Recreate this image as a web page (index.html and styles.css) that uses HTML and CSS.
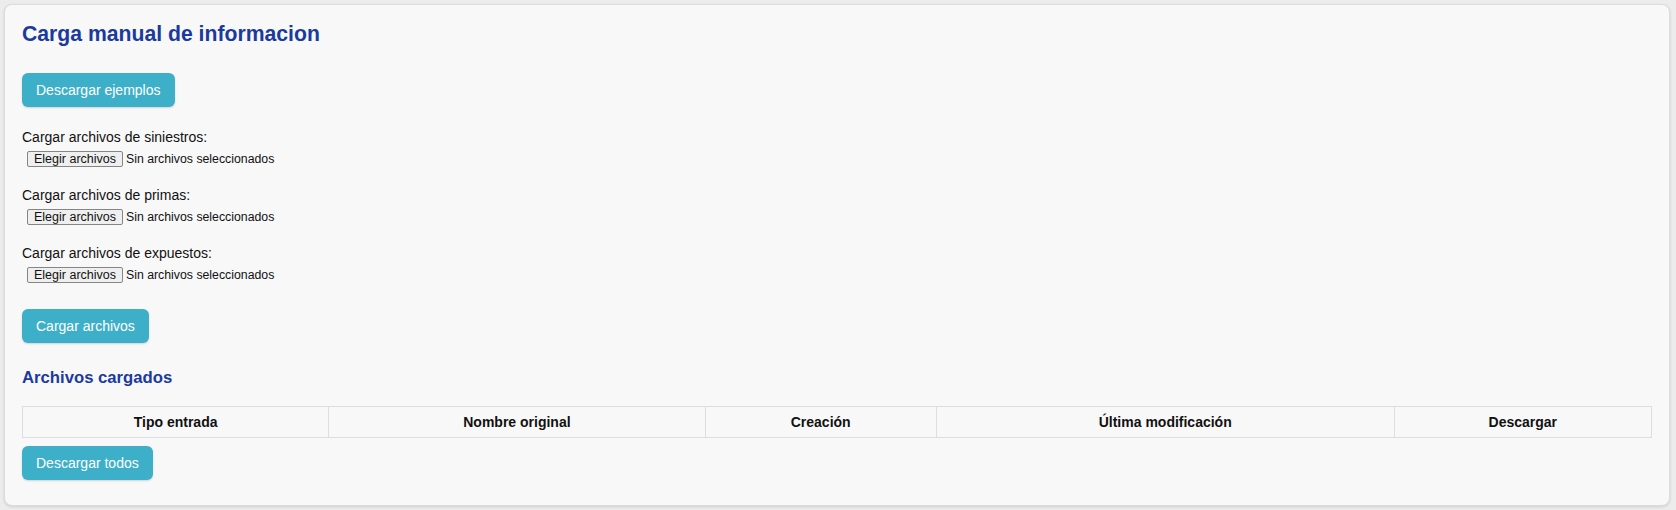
FILE: index.html
```html
<!DOCTYPE html>
<html lang="es">
<head>
    <meta charset="UTF-8">
    <meta name="viewport" content="width=device-width, initial-scale=1.0">
    <title>Carga manual de informacion</title>
    <link rel="stylesheet" href="styles.css">
</head>
<body>
    <div class="upload-card">
        <h2 class="title">Carga manual de informacion</h2>

        <button class="btn-info" id="downloadExamplesBtn">Descargar ejemplos</button>

        <!-- file pickers per input type -->
        <div class="file-group first">
            <span class="file-label">Cargar archivos de siniestros:</span>
            <label class="file-picker">
                <input type="file" id="siniestros" multiple>
                <span class="file-btn">Elegir archivos</span>
                <span class="file-name">Sin archivos seleccionados</span>
            </label>
        </div>
        <div class="file-group">
            <span class="file-label">Cargar archivos de primas:</span>
            <label class="file-picker">
                <input type="file" id="primas" multiple>
                <span class="file-btn">Elegir archivos</span>
                <span class="file-name">Sin archivos seleccionados</span>
            </label>
        </div>
        <div class="file-group">
            <span class="file-label">Cargar archivos de expuestos:</span>
            <label class="file-picker">
                <input type="file" id="expuestos" multiple>
                <span class="file-btn">Elegir archivos</span>
                <span class="file-name">Sin archivos seleccionados</span>
            </label>
        </div>

        <button class="btn-info upload-btn" id="uploadBtn">Cargar archivos</button>

        <h3 class="subtitle">Archivos cargados</h3>
        <table class="files-table">
            <thead>
                <tr>
                    <th class="col-tipo">Tipo entrada</th>
                    <th class="col-nombre">Nombre original</th>
                    <th class="col-creacion">Creación</th>
                    <th class="col-modif">Última modificación</th>
                    <th class="col-descargar">Descargar</th>
                </tr>
            </thead>
            <tbody id="filesBody"></tbody>
        </table>

        <button class="btn-info" id="downloadAllBtn">Descargar todos</button>
    </div>
</body>
</html>
```

FILE: styles.css
```css
body {
    font-family: "Liberation Sans", Arial, sans-serif;
    background-color: #ececec;
    color: #111;
    margin: 0;
    padding: 4px 6px 4px 4px;
}

.upload-card {
    background: #f8f8f8;
    border: 1px solid #dcdcdc;
    border-radius: 8px;
    box-shadow: 0 1px 3px rgba(0, 0, 0, 0.12);
    padding: 17px 17px 25px 17px;
}

.title {
    font-size: 21.2px;
    font-weight: bold;
    color: #1b3a9e;
    margin: 0 0 27px 0;
}

.btn-info {
    display: block;
    font-family: "Liberation Sans", Arial, sans-serif;
    font-size: 14px;
    line-height: 16px;
    padding: 9px 14px;
    border: none;
    border-radius: 6px;
    background: #3eafc9;
    color: #fff;
    box-shadow: 0 1px 2px rgba(0, 0, 0, 0.15);
    cursor: pointer;
}

.btn-info:hover {
    background: #3299b1;
}

.file-group {
    display: flex;
    flex-direction: column;
    align-items: flex-start;
    gap: 6px;
    margin-top: 20px;
}

.file-group.first {
    margin-top: 22px;
}

.file-label {
    font-size: 14px;
    line-height: 16px;
}

.file-picker {
    display: flex;
    align-items: center;
    gap: 3px;
    padding-left: 5px;
    font-size: 12.3px;
    cursor: pointer;
}

.file-picker input {
    display: none;
}

.file-btn {
    display: block;
    line-height: 14px;
    padding: 0 6px;
    background: #efefef;
    border: 1px solid #858585;
    border-radius: 2px;
    color: #111;
    font-size: 12.5px;
}

.file-name {
    color: #111;
}

.upload-btn {
    margin-top: 26px;
}

.subtitle {
    font-size: 16.7px;
    font-weight: bold;
    color: #1b3a9e;
    margin: 25px 0 18px 0;
}

.files-table {
    width: 100%;
    border-collapse: collapse;
    margin-bottom: 8px;
}

.files-table th {
    font-size: 14px;
    line-height: 16px;
    padding: 7px 12px;
    border: 1px solid #dedede;
    font-weight: bold;
    color: #111;
    text-align: center;
}

.col-tipo { width: 18.8%; }
.col-nombre { width: 23.1%; }
.col-creacion { width: 14.2%; }
.col-modif { width: 28.1%; }
.col-descargar { width: 15.8%; }
```
